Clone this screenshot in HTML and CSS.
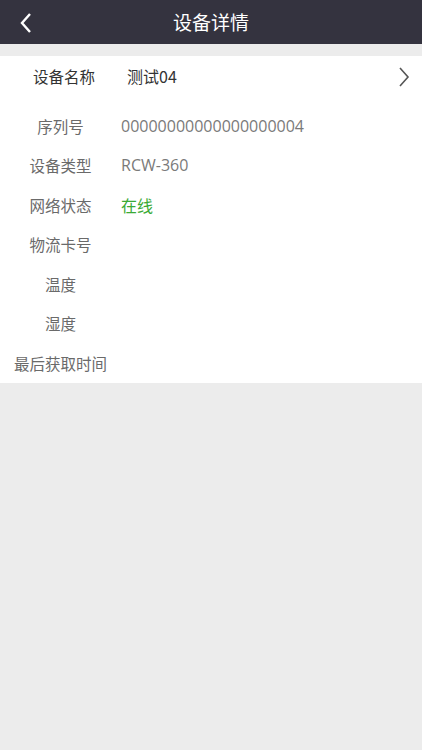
FILE: index.html
```html
<!DOCTYPE html>
<html lang="zh">
<head>
<meta charset="utf-8">
<link rel="stylesheet" href="styles.css">
</head>
<body>
<div class="page">
  <header class="bar">
    <span class="back">
      <svg width="14" height="22" viewBox="0 0 14 22"><path d="M11 2 L3 11 L11 20" fill="none" stroke="#fff" stroke-width="2.4"/></svg>
    </span>
    <h1 class="title">设备详情</h1>
  </header>
  <div class="gap"></div>
  <section class="card">
    <div class="row row-name">
      <span class="label">设备名称</span>
      <span class="value">测试04</span>
      <span class="more">
        <svg width="12" height="20" viewBox="0 0 12 20"><path d="M2 1 L10 10 L2 19" fill="none" stroke="#555" stroke-width="1.6"/></svg>
      </span>
    </div>
    <div class="row"><span class="label">序列号</span><span class="value">00000000000000000004</span></div>
    <div class="row"><span class="label">设备类型</span><span class="value">RCW-360</span></div>
    <div class="row"><span class="label">网络状态</span><span class="value online">在线</span></div>
    <div class="row"><span class="label">物流卡号</span><span class="value"></span></div>
    <div class="row"><span class="label">温度</span><span class="value"></span></div>
    <div class="row"><span class="label">湿度</span><span class="value"></span></div>
    <div class="row"><span class="label">最后获取时间</span><span class="value"></span></div>
  </section>
</div>
</body>
</html>
```
FILE: styles.css
```css
* { box-sizing: border-box; }
html, body { margin: 0; padding: 0; }
body {
  background: #ececec;
  font-family: "Noto Sans CJK SC", "Noto Sans", sans-serif;
  width: 422px;
  height: 750px;
}
.bar {
  height: 44px;
  background: #34333f;
  display: flex;
  align-items: center;
  justify-content: center;
  position: relative;
}
.back {
  position: absolute;
  left: 19px;
  top: 12px;
  display: flex;
}
.title {
  margin: 0;
  color: #fff;
  font-size: 19px;
  font-weight: 400;
  line-height: 44px;
}
.gap { height: 12px; background: #ececec; }
.card {
  background: #fff;
}
.row {
  display: flex;
  align-items: center;
  height: 39.5px;
  font-size: 15.5px;
}
.row-name {
  height: 40px;
  margin-bottom: 10px;
  position: relative;
}
.label {
  width: 121px;
  text-align: center;
  color: #6a6a6a;
  flex: none;
}
.value {
  color: #7a7a7a;
  font-family: "Open Sans", "Noto Sans CJK SC", sans-serif;
  font-size: 16px;
}
.row-name .label { color: #333; width: 127px; padding-left: 1px; }
.row-name .value { color: #333; flex: 1; font-family: "Noto Sans CJK SC", sans-serif; }
.online { color: #3aaa35; font-family: "Noto Sans CJK SC", sans-serif; }
.more {
  position: absolute;
  right: 12px;
  top: 11px;
  display: flex;
}
```
